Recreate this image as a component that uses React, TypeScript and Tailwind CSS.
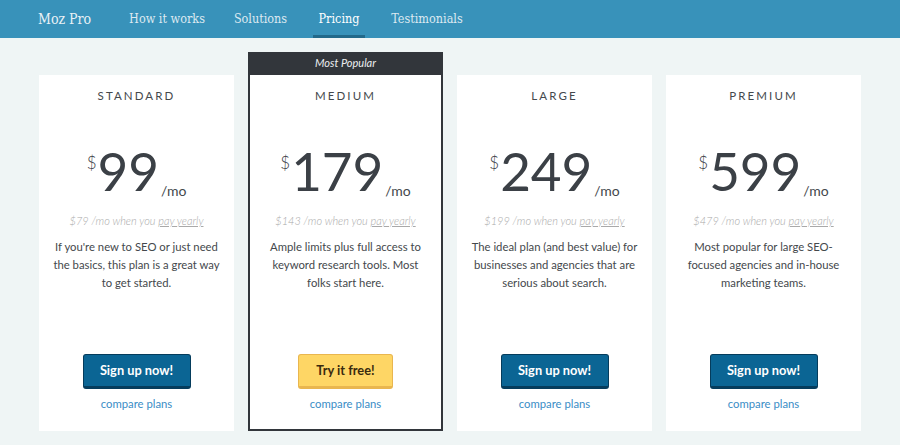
import React from "react";

type Plan = {
  name: string;
  price: string;
  yearly: string;
  lines: string[];
  popular?: boolean;
};

const plans: Plan[] = [
  {
    name: "STANDARD",
    price: "99",
    yearly: "$79",
    lines: ["If you're new to SEO or just need", "the basics, this plan is a great way", "to get started."],
  },
  {
    name: "MEDIUM",
    price: "179",
    yearly: "$143",
    lines: ["Ample limits plus full access to", "keyword research tools. Most", "folks start here."],
    popular: true,
  },
  {
    name: "LARGE",
    price: "249",
    yearly: "$199",
    lines: ["The ideal plan (and best value) for", "businesses and agencies that are", "serious about search."],
  },
  {
    name: "PREMIUM",
    price: "599",
    yearly: "$479",
    lines: ["Most popular for large SEO-", "focused agencies and in-house", "marketing teams."],
  },
];

function CardBody({ plan }: { plan: Plan }) {
  return (
    <div className="flex flex-1 flex-col items-center bg-white">
      <div className="mt-[11px] h-[20px] text-[11.5px] leading-[20px] tracking-[2.1px] text-[#44484c]">{plan.name}</div>
      <div className="mt-[38px] flex h-[52px] items-start text-[#3b4046]">
        <span className="mt-[10px] text-[17px] font-light leading-none">$</span>
        <span className="ml-[1px] text-[53px] font-normal leading-none">{plan.price}</span>
        <span className="ml-[2px] mt-[40px] text-[14px] leading-none text-[#44484c]">/mo</span>
      </div>
      <div className="mt-[17px] h-[16px] text-[11px] font-light italic leading-[16px] text-[#a9a9a9]">
        {plan.yearly} /mo when you <span className="underline">pay yearly</span>
      </div>
      <div className="mt-[9px] text-center text-[11.3px] leading-[18px] text-[#44484c]">
        {plan.lines.map((l) => (
          <div key={l} className="whitespace-nowrap">
            {l}
          </div>
        ))}
      </div>
      <div className="mt-auto flex flex-col items-center">
        {plan.popular ? (
          <button className="flex h-[35px] w-[95px] items-center justify-center rounded-[3px] border border-b-[3px] border-[#e9b64f] bg-[#fed665] text-[12.8px] font-bold text-[#3a2a0e]">
            Try it free!
          </button>
        ) : (
          <button className="flex h-[35px] w-[108px] items-center justify-center rounded-[3px] border border-b-[3px] border-[#053c5c] bg-[#0b6594] text-[12.8px] font-bold text-white">
            Sign up now!
          </button>
        )}
        <a className="mt-[7px] h-[16px] text-[11.3px] leading-[16px] text-[#3a8dc6]">compare plans</a>
      </div>
    </div>
  );
}

export default function App() {
  const navItems = [
    { label: "How it works", w: "w-[82px]" },
    { label: "Solutions", w: "w-[63px]" },
    { label: "Pricing", w: "w-[52px]", active: true },
    { label: "Testimonials", w: "w-[82px]" },
  ];
  return (
    <div className="h-[445px] w-full bg-[#eff5f5] font-['Lato','Liberation_Sans',sans-serif]">
      <nav className="flex h-[38px] items-stretch bg-[#3892ba] pl-[38px]">
        <div className="flex w-[88px] items-center font-['DejaVu_Serif_Condensed','DejaVu_Serif',serif] text-[14px] text-[#e8f1f6]">
          Moz Pro
        </div>
        <div className="flex gap-[21px]">
          {navItems.map((n) =>
            n.active ? (
              <a
                key={n.label}
                className={`${n.w} flex items-center justify-center border-b-[3px] border-[#22698a] pt-[3px] font-['DejaVu_Serif_Condensed','DejaVu_Serif',serif] text-[12.5px] text-white`}
              >
                {n.label}
              </a>
            ) : (
              <a
                key={n.label}
                className={`${n.w} flex items-center justify-center border-b-[3px] border-transparent pt-[3px] font-['DejaVu_Serif_Condensed','DejaVu_Serif',serif] text-[12.5px] text-[#dce9f1]`}
              >
                {n.label}
              </a>
            )
          )}
        </div>
      </nav>
      <div className="mx-auto mt-[14px] grid w-[822px] grid-cols-4 items-end gap-[14px]">
        {plans.map((p) =>
          p.popular ? (
            <div key={p.name} className="flex h-[379px] flex-col border-2 border-[#32363b] bg-white pb-[17px]">
              <div className="-mx-[2px] -mt-[2px] flex h-[23px] items-center justify-center bg-[#32363b] text-[11px] italic text-[#eceef0]">
                Most Popular
              </div>
              <CardBody plan={p} />
            </div>
          ) : (
            <div key={p.name} className="flex h-[356px] flex-col bg-white pb-[19px]">
              <CardBody plan={p} />
            </div>
          )
        )}
      </div>
    </div>
  );
}
